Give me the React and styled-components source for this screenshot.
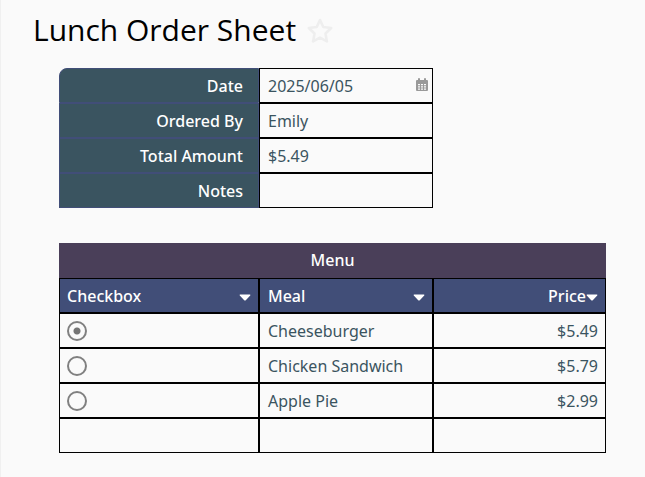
import React, { useState } from 'react';
import styled, { createGlobalStyle } from 'styled-components';

const meals = [
    { id: 'cheeseburger', meal: 'Cheeseburger', price: '$5.49' },
    { id: 'chicken', meal: 'Chicken Sandwich', price: '$5.79' },
    { id: 'applepie', meal: 'Apple Pie', price: '$2.99' },
];

const StarIcon = () => (
    <svg width="28" height="28" viewBox="0 0 28 28" fill="none" stroke="#eeeeee" strokeWidth="2.6" strokeLinejoin="round" aria-hidden="true">
        <path d="M14 4 L17.300 11 L25.200 12 L19.500 17.500 L20.900 25.400 L14 21.700 L7.100 25.400 L8.500 17.500 L2.800 12 L10.700 11 Z" />
    </svg>
);

const CalendarIcon = () => (
    <svg width="12" height="16" viewBox="0 0 12 16" aria-hidden="true">
        <path fill="#999999" d="M1 2h1V1q0-1 1-1t1 1v1h4V1q0-1 1-1t1 1v1h1q1 0 1 1v1.500H0V3q0-1 1-1z" />
        <path fill="#999999" fillRule="evenodd" d="M0 4h12v8q0 1-1 1H1q-1 0-1-1zM2 6v1.300h2V6zM5 6v1.300h2V6zM8 6v1.300h2V6zM2 8.200v1.300h2V8.200zM5 8.200v1.300h2V8.200zM8 8.200v1.300h2V8.200zM2 10.400v1.300h2v-1.300zM5 10.400v1.300h2v-1.300zM8 10.400v1.300h2v-1.300z" />
    </svg>
);

const CaretIcon = () => (
    <svg width="12" height="10" viewBox="0 0 12 10" aria-hidden="true">
        <path fill="#ffffff" d="M1.200 3.600h9.600q1 0 .4.900L6.800 9.200q-.8.700-1.600 0L.8 4.500q-.6-.9.400-.9z" />
    </svg>
);

const App = () => {
    const [selected, setSelected] = useState('cheeseburger');
    const [date, setDate] = useState('2025/06/05');
    const [name, setName] = useState('Emily');
    const [notes, setNotes] = useState('');

    const total = meals.find((item) => item.id === selected).price;

    return (
        <>
            <GlobalStyle />
            <Page>
                <Header>
                    <Title>Lunch Order Sheet</Title>
                    <IconButton type="button" aria-label="Favorite">
                        <StarIcon />
                    </IconButton>
                </Header>
                <Content>
                    <OrderForm onSubmit={(e) => e.preventDefault()}>
                        <Label htmlFor="date" $first>Date</Label>
                        <Field>
                            <Input id="date" value={date} onChange={(e) => setDate(e.target.value)} />
                            <IconButton type="button" aria-label="Pick a date">
                                <CalendarIcon />
                            </IconButton>
                        </Field>
                        <Label htmlFor="name">Ordered By</Label>
                        <Field>
                            <Input id="name" value={name} onChange={(e) => setName(e.target.value)} />
                        </Field>
                        <Label htmlFor="total">Total Amount</Label>
                        <Field>
                            <Input id="total" value={total} readOnly />
                        </Field>
                        <Label htmlFor="notes">Notes</Label>
                        <Field>
                            <Input id="notes" value={notes} onChange={(e) => setNotes(e.target.value)} />
                        </Field>
                    </OrderForm>

                    <MenuTable>
                        <colgroup>
                            <Col $share={200} />
                            <Col $share={174} />
                            <Col $share={173} />
                        </colgroup>
                        <thead>
                            <tr>
                                <MenuHeading colSpan={3}>Menu</MenuHeading>
                            </tr>
                            <tr>
                                <ColumnHeading>
                                    <HeadingContent>
                                        Checkbox
                                        <IconButton type="button" aria-label="Sort by checkbox"><CaretIcon /></IconButton>
                                    </HeadingContent>
                                </ColumnHeading>
                                <ColumnHeading>
                                    <HeadingContent>
                                        Meal
                                        <IconButton type="button" aria-label="Sort by meal"><CaretIcon /></IconButton>
                                    </HeadingContent>
                                </ColumnHeading>
                                <ColumnHeading>
                                    <HeadingContent $end>
                                        Price
                                        <IconButton type="button" aria-label="Sort by price"><CaretIcon /></IconButton>
                                    </HeadingContent>
                                </ColumnHeading>
                            </tr>
                        </thead>
                        <tbody>
                            {meals.map((item) => (
                                <tr key={item.id}>
                                    <Cell>
                                        <Radio
                                            name="meal"
                                            aria-labelledby={item.id}
                                            checked={selected === item.id}
                                            onChange={() => setSelected(item.id)}
                                        />
                                    </Cell>
                                    <Cell id={item.id}>{item.meal}</Cell>
                                    <Cell $end>{item.price}</Cell>
                                </tr>
                            ))}
                            <tr>
                                <Cell />
                                <Cell />
                                <Cell />
                            </tr>
                        </tbody>
                    </MenuTable>
                </Content>
            </Page>
        </>
    );
};

export default App;

const GlobalStyle = createGlobalStyle`
    * {
        box-sizing: border-box;
    }

    body {
        margin: 0;
        background: #fafafa;
        color: #3a5460;
        font-family: 'Noto Sans', 'Open Sans', sans-serif;
        font-size: 16px;
        line-height: 24px;
    }
`;

const Page = styled.main`
    min-height: 100vh;
    border-left: 1px solid #f0f0f0;
`;

const Header = styled.header`
    display: flex;
    align-items: center;
    gap: 10px;
    padding: 10px 32px 18px;
`;

const Title = styled.h1`
    margin: 0;
    color: #000;
    font-family: 'Open Sans', sans-serif;
    font-size: 30px;
    font-weight: 400;
    line-height: 40px;
`;

const IconButton = styled.button`
    display: flex;
    flex: none;
    padding: 0;
    border: 0;
    background: none;
    cursor: pointer;
`;

const Content = styled.div`
    padding: 0 39px 24px 58px;
`;

const OrderForm = styled.form`
    display: grid;
    grid-template-columns: minmax(0, 200fr) minmax(0, 174fr);
    grid-auto-rows: 35px;
    margin: 0 173px 35px 0;
`;

const Label = styled.label`
    display: flex;
    align-items: center;
    justify-content: flex-end;
    padding: 0 15px;
    border: 1px solid #414e78;
    border-top-left-radius: ${(props) => (props.$first ? '8px' : '0')};
    background: #3a5460;
    color: #fff;
    font-weight: 500;
`;

const Field = styled.div`
    display: flex;
    align-items: center;
    padding: 0 4px 0 8px;
    border: 1px solid #000;
`;

const Input = styled.input`
    flex: 1;
    min-width: 0;
    padding: 0;
    border: 0;
    outline: 0;
    background: transparent;
    color: inherit;
    font: inherit;
`;

const MenuTable = styled.table`
    width: 100%;
    table-layout: fixed;
    border-collapse: separate;
    border-spacing: 0;
`;

const Col = styled.col`
    width: ${(props) => (props.$share / 547) * 100}%;
`;

const MenuHeading = styled.th`
    height: 35px;
    padding: 0 0 2px;
    background: #4a3f59;
    color: #fff;
    font-weight: 500;
`;

const ColumnHeading = styled.th`
    height: 35px;
    padding: 0 7px 0 8px;
    border: 1px solid #000;
    background: #414e78;
    color: #fff;
    font-weight: 500;

    &:first-child {
        padding-left: 7px;
    }
`;

const HeadingContent = styled.div`
    display: flex;
    align-items: center;
    justify-content: ${(props) => (props.$end ? 'flex-end' : 'space-between')};
`;

const Cell = styled.td`
    height: 35px;
    padding: 0 7px 0 8px;
    border: 1px solid #000;
    text-align: ${(props) => (props.$end ? 'right' : 'left')};

    &:first-child {
        padding-left: 7px;
    }
`;

const Radio = styled.input.attrs({ type: 'radio' })`
    display: block;
    appearance: none;
    width: 20px;
    height: 20px;
    margin: 0;
    border: 2px solid #808080;
    border-radius: 50%;

    &:checked {
        background: radial-gradient(circle, #757575 3px, transparent 4px);
    }
`;
